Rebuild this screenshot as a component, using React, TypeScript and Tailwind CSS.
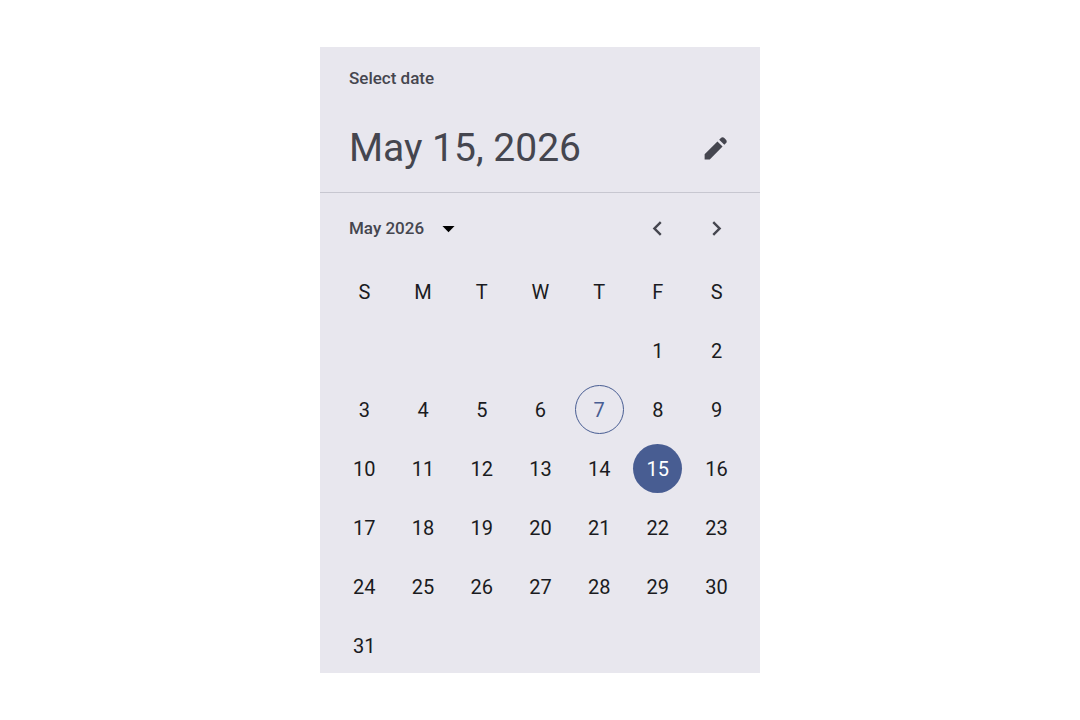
import { useState } from "react";

const weekdays = [
  { short: "S", name: "Sunday" },
  { short: "M", name: "Monday" },
  { short: "T", name: "Tuesday" },
  { short: "W", name: "Wednesday" },
  { short: "T", name: "Thursday" },
  { short: "F", name: "Friday" },
  { short: "S", name: "Saturday" },
];

const FIRST_WEEKDAY = 5;
const DAYS_IN_MONTH = 31;
const TODAY = 7;

const weeks: (number | null)[][] = Array.from({ length: 6 }, (_, week) =>
  Array.from({ length: 7 }, (_, column) => {
    const day = week * 7 + column - FIRST_WEEKDAY + 1;
    return day >= 1 && day <= DAYS_IN_MONTH ? day : null;
  }),
);

function dayStyle(day: number, selected: number) {
  if (day === selected) return "bg-[#485d92] text-white";
  if (day === TODAY) return "border border-[#485d92] text-[#485d92]";
  return "text-[#1a1b21]";
}

function Icon({ path, className }: { path: string; className: string }) {
  return (
    <svg viewBox="0 0 24 24" fill="currentColor" aria-hidden="true" className={className}>
      <path d={path} />
    </svg>
  );
}

export default function App() {
  const [selected, setSelected] = useState(15);

  return (
    <main className="flex min-h-screen items-center justify-center bg-white font-['Roboto',sans-serif]">
      <section aria-label="Date picker" className="w-full max-w-[440px] bg-[#e8e7ee] text-[#45464f]">
        <header className="border-b border-[#c7c7d0] pt-[19px] pb-[19px]">
          <p className="px-[29px] text-[17px] leading-6 font-medium">Select date</p>
          <div className="mt-[34px] flex h-[49px] items-center justify-between pr-5 pl-[29px]">
            <h1 className="text-[39px] leading-[49px]">May {selected}, 2026</h1>
            <button type="button" aria-label="Edit date" className="flex size-[49px] items-center justify-center rounded-full">
              <Icon
                className="size-[29px]"
                path="m19.3 8.925-4.25-4.2 1.4-1.4q.575-.575 1.413-.575t1.412.575l1.4 1.4q.575.575.6 1.388t-.55 1.387L19.3 8.925ZM17.85 10.4 7.25 21H3v-4.25l10.6-10.6 4.25 4.25Z"
              />
            </button>
          </div>
        </header>

        <div className="flex items-center justify-between pt-[11px] pr-[19px] pb-1 pl-[15px]">
          <div className="relative flex items-center">
            <select
              aria-label="Month"
              defaultValue="May 2026"
              className="h-[49px] w-[128px] appearance-none bg-transparent pl-[14px] text-[17px] font-medium"
            >
              <option>April 2026</option>
              <option>May 2026</option>
              <option>June 2026</option>
            </select>
            <Icon className="pointer-events-none absolute right-0 size-[29px] text-black" path="M7 10l5 5 5-5z" />
          </div>
          <div className="flex gap-[10px]">
            <button type="button" aria-label="Previous month" className="flex size-[49px] items-center justify-center rounded-full">
              <Icon className="size-[29px]" path="M15.41 7.41L14 6l-6 6 6 6 1.41-1.41L10.83 12z" />
            </button>
            <button type="button" aria-label="Next month" className="flex size-[49px] items-center justify-center rounded-full">
              <Icon className="size-[29px]" path="M10 6L8.59 7.41 13.17 12l-4.58 4.59L10 18l6-6z" />
            </button>
          </div>
        </div>

        <div className="pr-[14px] pb-[3px] pl-[15px]">
          <table className="w-full table-fixed border-collapse text-[20px] leading-6 text-[#1a1b21]">
            <thead>
              <tr>
                {weekdays.map((weekday) => (
                  <th key={weekday.name} scope="col" abbr={weekday.name} className="h-[59px] p-0 pt-[10px] text-center font-normal">
                    {weekday.short}
                  </th>
                ))}
              </tr>
            </thead>
            <tbody>
              {weeks.map((week, row) => (
                <tr key={row}>
                  {week.map((day, column) => (
                    <td key={column} className="h-[59px] p-0 pt-[10px]">
                      {day !== null && (
                        <button
                          type="button"
                          aria-pressed={day === selected}
                          onClick={() => setSelected(day)}
                          className={`mx-auto flex size-[49px] items-center justify-center rounded-full ${dayStyle(day, selected)}`}
                        >
                          {day}
                        </button>
                      )}
                    </td>
                  ))}
                </tr>
              ))}
            </tbody>
          </table>
        </div>
      </section>
    </main>
  );
}
